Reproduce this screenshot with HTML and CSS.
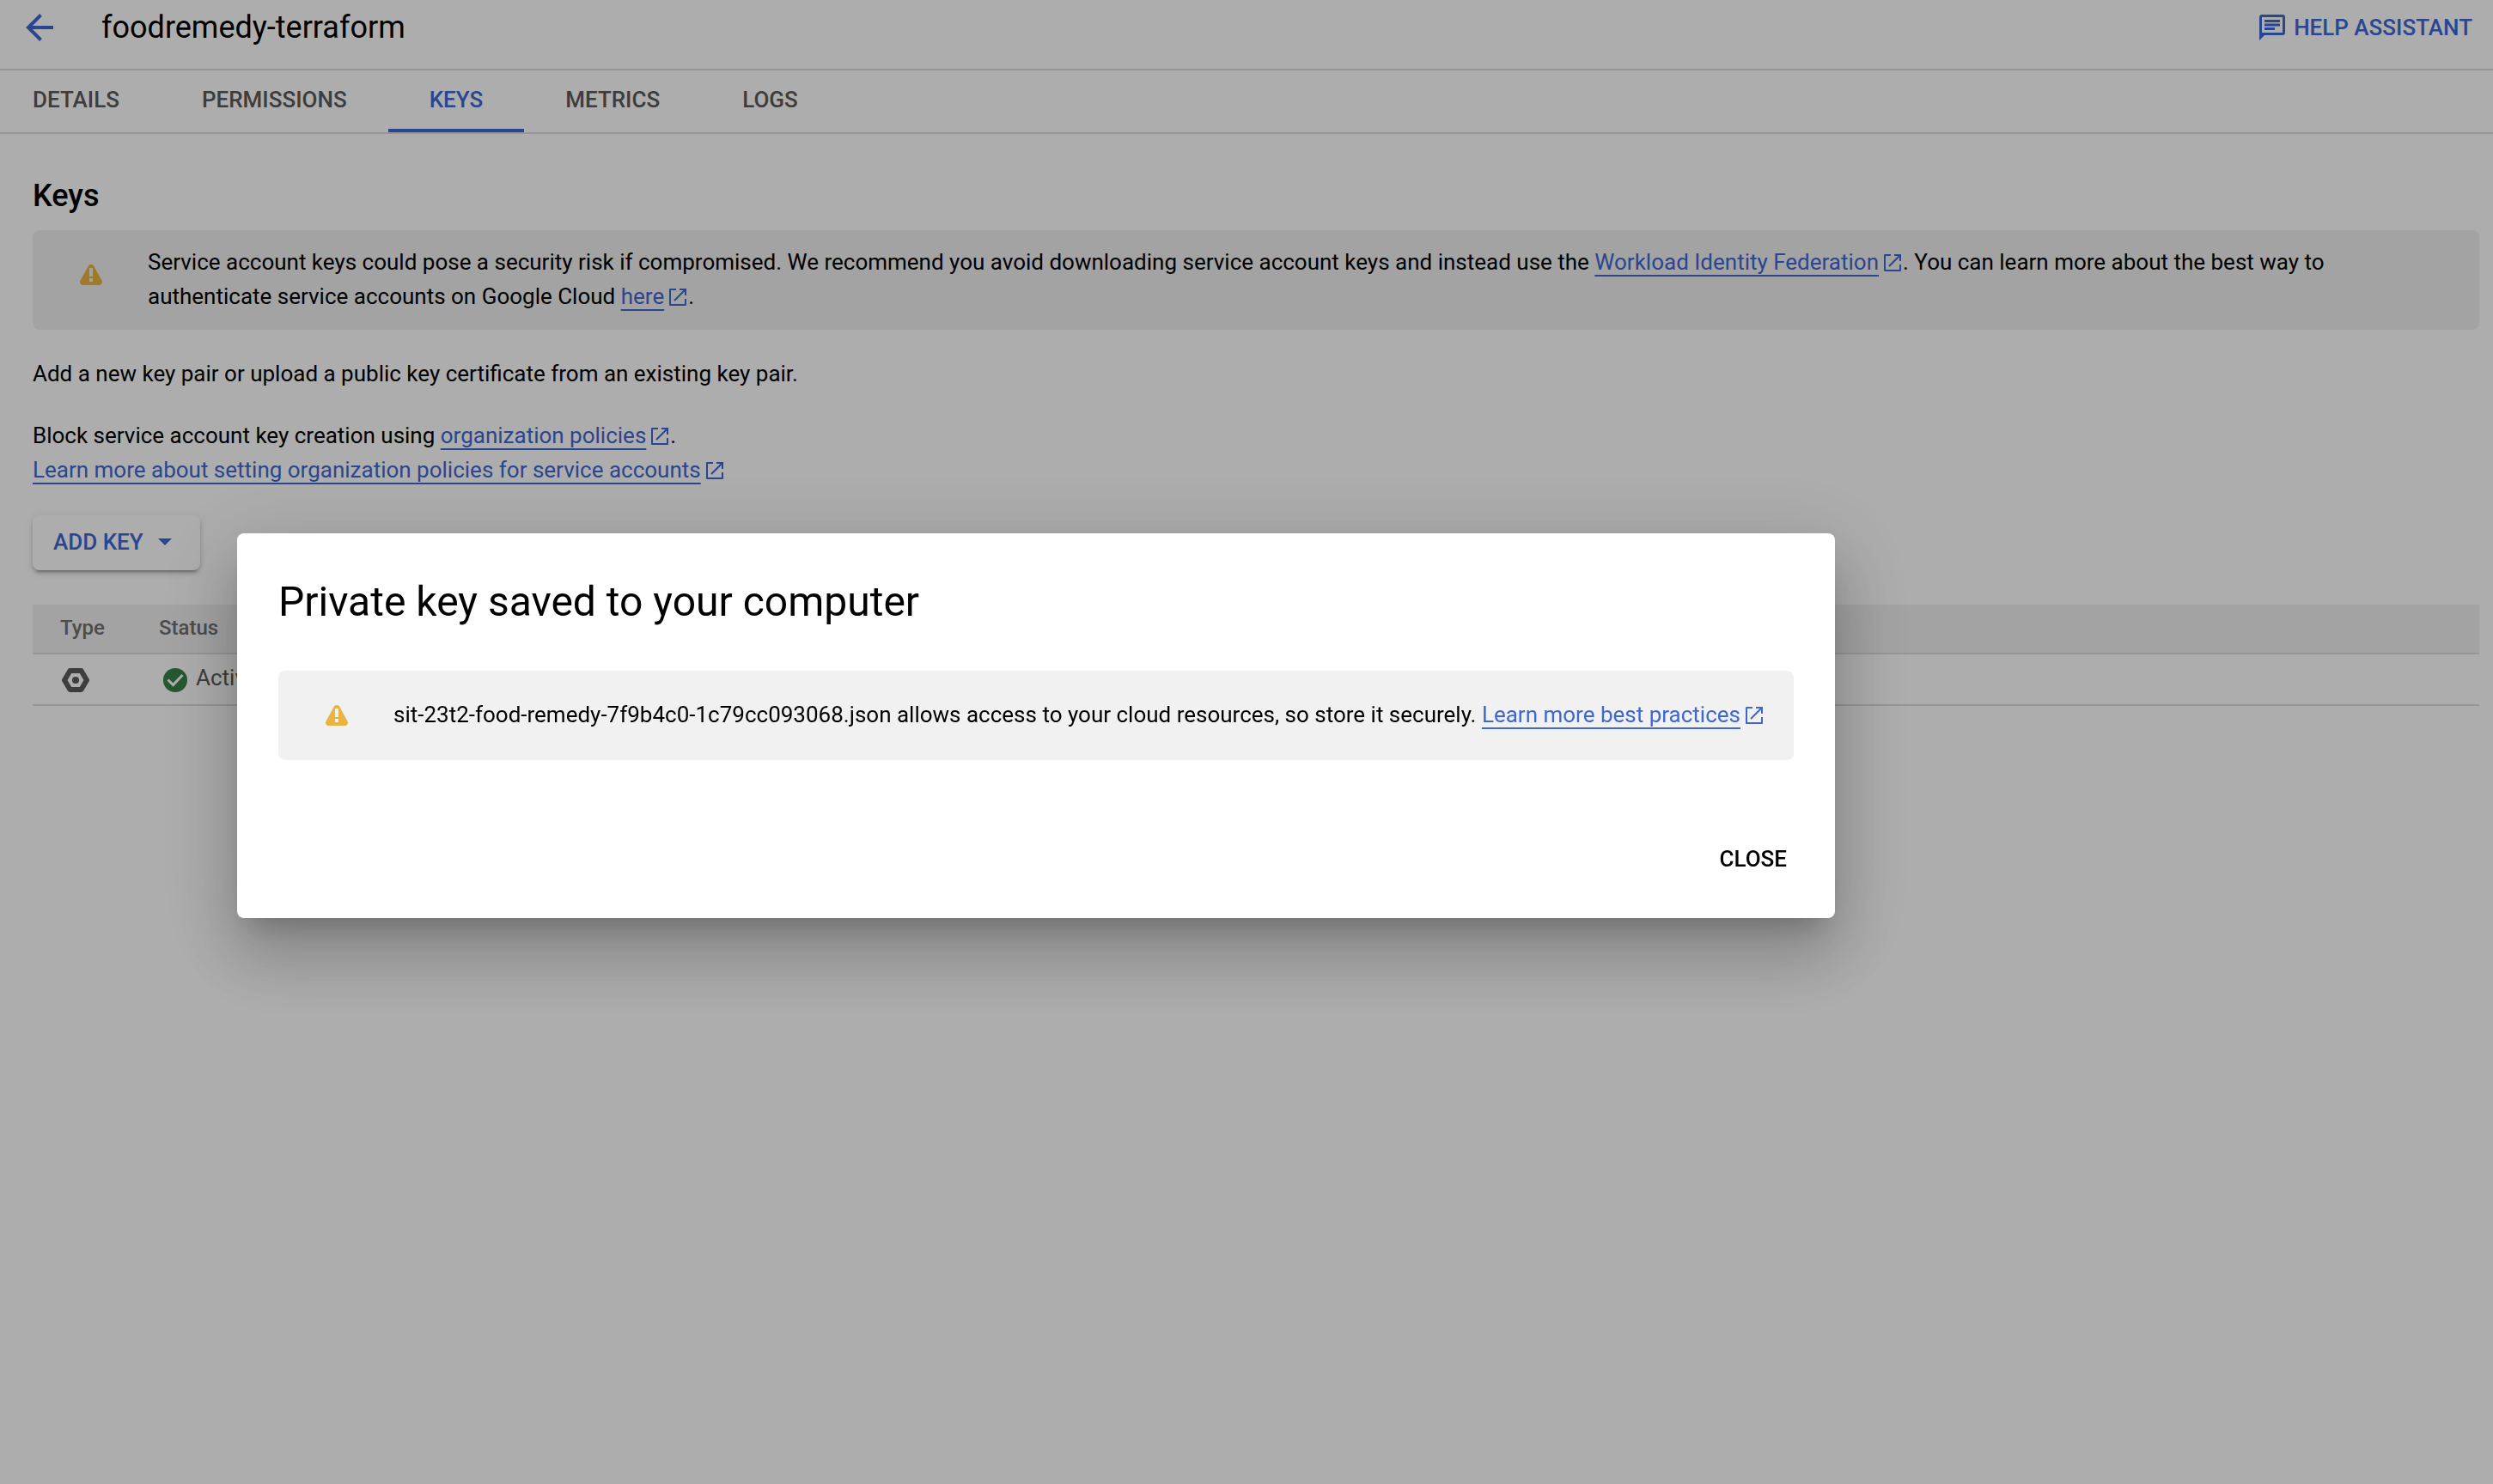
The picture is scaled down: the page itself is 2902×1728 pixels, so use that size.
FILE: index.html
```html
<!DOCTYPE html>
<html lang="en">
<head>
<meta charset="utf-8">
<title>foodremedy-terraform – Keys</title>
<link rel="stylesheet" href="styles.css">
</head>
<body>
<svg class="sprite" aria-hidden="true">
  <symbol id="external" viewBox="0 0 24 24">
    <path fill="none" stroke="currentColor" stroke-width="2" stroke-linejoin="round" d="M10 3H3v18h18v-7"/>
    <path fill="none" stroke="currentColor" stroke-width="2" d="M14 3h7v7M21 3L8 16"/>
  </symbol>
  <symbol id="warning" viewBox="0 0 26 24">
    <path fill="currentColor" fill-rule="evenodd" d="M9.800 1.800a3.700 3.700 0 0 1 6.400 0l9.200 16.600a3.700 3.700 0 0 1-3.200 5.600H3.800a3.700 3.700 0 0 1-3.200-5.600zM11 4v10h4V4zM11 16v4h4v-4z"/>
  </symbol>
</svg>

<header class="page-header">
  <button class="icon-button" type="button" aria-label="Back">
    <svg class="back-icon" viewBox="0 0 32 32" aria-hidden="true"><path fill="none" stroke="currentColor" stroke-width="4" d="M32 16H3M17.500 1.500L3 16L17.500 30.500"/></svg>
  </button>
  <h1 class="page-title">foodremedy-terraform</h1>
  <button class="help-button" type="button">
    <svg class="help-icon" viewBox="0 0 30 30" aria-hidden="true"><path fill="currentColor" fill-rule="evenodd" d="M3 0h24a3 3 0 0 1 3 3v18a3 3 0 0 1-3 3H6l-6 6V3a3 3 0 0 1 3-3zM3 3v18h24V3zM6 6h18v3H6zM6 10.500h18v3H6zM6 15h12v3H6z"/></svg>
    HELP ASSISTANT
  </button>
</header>

<nav class="tabs">
  <a class="tab" href="#details">DETAILS</a>
  <a class="tab" href="#permissions">PERMISSIONS</a>
  <a class="tab tab-active" href="#keys" aria-current="page">KEYS</a>
  <a class="tab" href="#metrics">METRICS</a>
  <a class="tab" href="#logs">LOGS</a>
</nav>

<main class="content">
  <h2 class="section-title">Keys</h2>
  <div class="notice">
    <svg class="notice-icon notice-icon-raised" aria-hidden="true"><use href="#warning"/></svg>
    <p class="notice-text">Service account keys could pose a security risk if compromised. We recommend you avoid downloading service account keys and instead use the <a class="link" href="#wif">Workload Identity Federation</a><svg class="external" aria-hidden="true"><use href="#external"/></svg>. You can learn more about the best way to authenticate service accounts on Google Cloud <a class="link" href="#auth">here</a><svg class="external" aria-hidden="true"><use href="#external"/></svg>.</p>
  </div>
  <div class="intro">
    <p>Add a new key pair or upload a public key certificate from an existing key pair.</p>
    <p>Block service account key creation using <a class="link" href="#policies">organization policies</a><svg class="external" aria-hidden="true"><use href="#external"/></svg>.<br><a class="link" href="#learn">Learn more about setting organization policies for service accounts</a><svg class="external" aria-hidden="true"><use href="#external"/></svg></p>
  </div>
  <button class="add-key" type="button">ADD KEY
    <svg class="caret" viewBox="0 0 16 8" aria-hidden="true"><path fill="currentColor" d="M0 0h16L8 8z"/></svg>
  </button>
  <table class="keys-table">
    <thead>
      <tr><th class="col-type" scope="col">Type</th><th scope="col">Status</th></tr>
    </thead>
    <tbody>
      <tr>
        <td class="col-type"><svg class="key-icon" viewBox="0 0 32 28" role="img" aria-label="Google managed"><path fill="none" stroke="currentColor" stroke-width="6" stroke-linejoin="round" d="M9.500 3h13L29 14l-6.500 11h-13L3 14z"/><circle cx="16" cy="14" r="4" fill="currentColor"/></svg></td>
        <td><svg class="status-icon" viewBox="0 0 28 28" aria-hidden="true"><circle class="status-disc" cx="14" cy="14" r="14"/><path class="status-tick" d="M5.500 13.500l6 6L22.500 8"/></svg>Active</td>
      </tr>
    </tbody>
  </table>
</main>

<div class="backdrop">
  <section class="dialog" role="dialog" aria-modal="true" aria-labelledby="dialog-title">
    <h2 class="dialog-title" id="dialog-title">Private key saved to your computer</h2>
    <div class="notice notice-roomy">
      <svg class="notice-icon" aria-hidden="true"><use href="#warning"/></svg>
      <p class="notice-text">sit-23t2-food-remedy-7f9b4c0-1c79cc093068.json allows access to your cloud resources, so store it securely. <a class="link" href="#practices">Learn more best practices</a><svg class="external" aria-hidden="true"><use href="#external"/></svg></p>
    </div>
    <div class="dialog-actions"><button class="close-button" type="button">CLOSE</button></div>
  </section>
</div>
</body>
</html>
```

FILE: styles.css
```css
* { box-sizing: border-box; }

body {
  margin: 0;
  min-height: 100vh;
  background: #fff;
  color: #000;
  font: 400 26px/40px Roboto, "Liberation Sans", sans-serif;
}

h1, h2, p { margin: 0; }

button {
  border: 0;
  padding: 0;
  background: none;
  color: inherit;
  font: 500 26px/40px Roboto, "Liberation Sans", sans-serif;
}

svg { display: block; flex: none; }
.sprite { position: absolute; width: 0; height: 0; }

/* Page header */
.page-header {
  display: flex;
  align-items: center;
  height: 82px;
  padding: 0 24px 16px 30px;
  border-bottom: 2px solid #dedede;
}
.icon-button { color: #3e67d4; }
.back-icon { width: 32px; height: 32px; }
.page-title {
  flex: 1;
  padding-left: 56px;
  font-size: 36px;
  font-weight: 400;
}
.help-button {
  display: flex;
  align-items: center;
  gap: 10px;
  color: #3e67d4;
}
.help-icon { width: 30px; height: 30px; }

/* Tabs */
.tabs {
  display: flex;
  height: 74px;
  border-bottom: 2px solid #dedede;
}
.tab {
  padding: 14px 48px;
  border-bottom: 4px solid transparent;
  color: #5a5a5a;
  font-weight: 500;
  text-decoration: none;
}
.tab:first-child { padding-left: 38px; }
.tab-active { border-color: #3e67d4; color: #3e67d4; }

/* Content */
.content { padding: 52px 16px 0 38px; }
.section-title {
  margin-bottom: 20px;
  font-size: 36px;
  font-weight: 500;
}
.notice {
  display: flex;
  align-items: center;
  padding: 17px 32px 19px 54px;
  border-radius: 8px;
  background: #f1f1f1;
}
.notice-roomy { padding-block: 31px 33px; }
.notice-icon {
  width: 26px;
  height: 24px;
  margin: 2px 0 0 1px;
  color: #e9b43f;
}
.notice-icon-raised { margin-block: 0 10px; }
.notice-text { padding-left: 53px; }
.intro {
  display: grid;
  gap: 32px;
  padding: 31px 0 33px;
}

.link {
  color: #3e67d4;
  text-decoration: underline 2px;
  text-underline-offset: 6px;
  text-decoration-skip-ink: none;
}
.external {
  display: inline-block;
  width: 24px;
  height: 24px;
  margin-left: 4px;
  vertical-align: -4px;
  color: #3e67d4;
}

.add-key {
  display: flex;
  align-items: center;
  gap: 17px;
  padding: 11px 33px 13px 24px;
  border-radius: 8px;
  color: #3e67d4;
  box-shadow: 0 6px 2px -4px rgba(0, 0, 0, .2), 0 4px 4px rgba(0, 0, 0, .14), 0 2px 10px rgba(0, 0, 0, .12);
}
.caret { width: 16px; height: 8px; }

/* Keys table */
.keys-table {
  width: 100%;
  margin-top: 40px;
  border-spacing: 0;
}
.keys-table th {
  height: 58px;
  padding: 0 0 2px;
  border-bottom: 2px solid #dedede;
  background: #f1f1f1;
  color: #707070;
  font-size: 24px;
  font-weight: 500;
  text-align: left;
}
.keys-table td {
  height: 60px;
  padding: 0 0 4px;
  border-bottom: 2px solid #dedede;
  color: #5a5a5a;
}
.keys-table .col-type { width: 147px; padding-left: 32px; }
.key-icon, .status-icon {
  display: inline-block;
  height: 28px;
  vertical-align: -8px;
}
.key-icon { width: 32px; margin-left: 2px; }
.status-icon { width: 28px; margin: 0 10px 0 5px; }
.status-disc { fill: #378148; }
.status-tick { fill: none; stroke: #fff; stroke-width: 3; }

/* Dialog */
.backdrop {
  position: fixed;
  inset: 0;
  display: flex;
  align-items: center;
  padding: 0 766px 38px 276px;
  background: rgba(0, 0, 0, .32);
}
.dialog {
  flex: 1;
  padding: 48px;
  border-radius: 8px;
  background: #fff;
  box-shadow: 0 22px 30px -14px rgba(0, 0, 0, .2), 0 48px 76px 6px rgba(0, 0, 0, .14), 0 18px 92px 16px rgba(0, 0, 0, .12);
}
.dialog-title {
  margin-bottom: 48px;
  font-size: 48px;
  font-weight: 400;
  line-height: 64px;
}
.dialog-actions {
  display: flex;
  justify-content: flex-end;
  margin-top: 95px;
  padding: 0 8px 1px 0;
}
```
